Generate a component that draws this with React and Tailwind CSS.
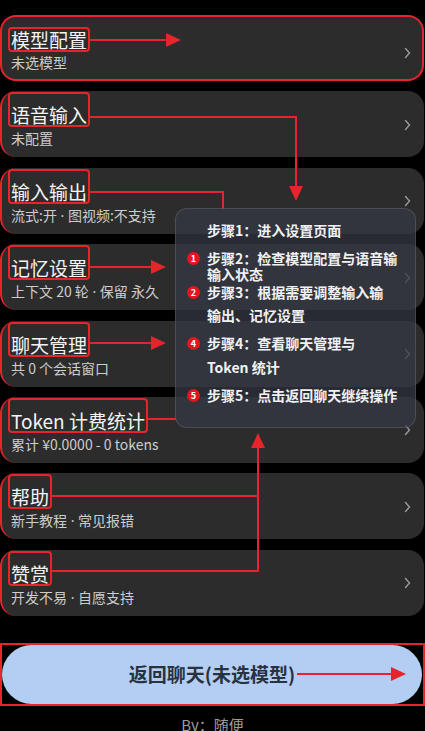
import React from 'react';

const RED = '#e5242b';

const cards = [
  { t: '模型配置', s: '未选模型', first: true },
  { t: '语音输入', s: '未配置' },
  { t: '输入输出', s: '流式:开 · 图视频:不支持' },
  { t: '记忆设置', s: '上下文 20 轮 · 保留 永久' },
  { t: '聊天管理', s: '共 0 个会话窗口' },
  { t: 'Token 计费统计', s: '累计 ¥0.0000 - 0 tokens' },
  { t: '帮助', s: '新手教程 · 常见报错' },
  { t: '赞赏', s: '开发不易 · 自愿支持' },
];

function Chevron() {
  return (
    <svg width="7" height="12" viewBox="0 0 7 12" className="shrink-0">
      <path d="M1.5 1.5 L5.5 6 L1.5 10.5" fill="none" stroke="#9a9a9a" strokeWidth="1.4" strokeLinecap="round" strokeLinejoin="round" />
    </svg>
  );
}

function Sub({ s }) {
  const parts = s.split(' · ');
  return parts.map((p, i) => (
    <React.Fragment key={i}>
      {i > 0 ? <span className="font-['Noto_Sans',sans-serif]"> · </span> : null}
      {p}
    </React.Fragment>
  ));
}

function Card({ t, s, first }) {
  return (
    <div
      className={
        first
          ? 'flex h-[66px] items-start justify-between rounded-[16px] border-2 border-[#e5242b] bg-[#2c2c2c] pt-[10px] pl-[6px]'
          : 'flex h-[66px] items-start justify-between rounded-[16px] border-l-2 border-[#e5242b] bg-[#2c2c2c] pt-[1px] pl-[6px]'
      }
    >
      <div className="flex flex-col items-start">
        <span
          className={
            first
              ? 'rounded-[4px] border-2 border-[#e5242b] px-[1px] text-[19px] leading-[21px] text-[#f4f4f4]'
              : 'rounded-[4px] border-2 border-[#e5242b] px-[1px] pt-[10px] text-[19px] leading-[21px] text-[#f4f4f4]'
          }
        >
          {t}
        </span>
        <span className={first ? 'mt-[1px] pl-[3px] text-[14px] leading-[18px] text-[#cdcdcd]' : 'mt-[2px] pl-[3px] text-[14px] leading-[18px] text-[#cdcdcd]'}>
          <Sub s={s} />
        </span>
      </div>
      <div className={first ? 'mr-[11px] self-center' : 'mr-[13px] self-center'}>
        <Chevron />
      </div>
    </div>
  );
}

function Badge({ n }) {
  return (
    <span className="flex h-[13px] w-[13px] items-center justify-center rounded-full bg-[#e3161f] text-[9px] font-bold leading-none text-white">
      {n}
    </span>
  );
}

function Line({ badge, children, mt }) {
  return (
    <div className={`flex h-[16px] items-center ${mt}`}>
      <div className="flex w-[31px] shrink-0 pl-[11px]">{badge ? <Badge n={badge} /> : null}</div>
      <span className="whitespace-nowrap text-[14px] font-semibold leading-[16px] text-[#f1f1f3]">{children}</span>
    </div>
  );
}

function Popup() {
  return (
    <div className="absolute left-[175px] top-[208px] flex h-[220px] w-[241px] flex-col rounded-[12px] border border-[rgba(255,255,255,0.12)] bg-[rgba(52,56,68,0.76)] pt-[13px]">
      <Line mt="mt-0">步骤1：进入设置页面</Line>
      <Line badge="1" mt="mt-[12px]">步骤2：检查模型配置与语音输</Line>
      <Line mt="mt-0">输入状态</Line>
      <Line badge="2" mt="mt-[2px]">步骤3：根据需要调整输入输</Line>
      <Line mt="mt-[7px]">输出、记忆设置</Line>
      <Line badge="4" mt="mt-[12px]">步骤4：查看聊天管理与</Line>
      <Line mt="mt-[8px]">Token 统计</Line>
      <Line badge="5" mt="mt-[12px]">步骤5：点击返回聊天继续操作</Line>
    </div>
  );
}

function Annotations() {
  return (
    <svg className="pointer-events-none absolute left-0 top-0" width="425" height="731" viewBox="0 0 425 731">
      <g fill="none" stroke={RED} strokeWidth="2">
        <path d="M90 40 H167" />
        <path d="M90 117 H296 V188" />
        <path d="M90 192 H223 V209" />
        <path d="M90 267 H152" />
        <path d="M90 343 H152" />
        <path d="M147 419 H176" />
        <path d="M52 496 H258" />
        <path d="M52 571 H258" />
        <path d="M258 572 V446" />
        <path d="M297 674 H392" />
      </g>
      <g fill={RED}>
        <polygon points="166,33 181,40 166,47" />
        <polygon points="289,186 303,186 296,201" />
        <polygon points="151,260 166,267 151,274" />
        <polygon points="151,336 166,343 151,350" />
        <polygon points="251,448 265,448 258,433" />
        <polygon points="391,667 406,674 391,681" />
      </g>
    </svg>
  );
}

export default function App() {
  return (
    <div className="relative h-[731px] w-[425px] overflow-hidden bg-black font-['Noto_Sans_CJK_SC','Noto_Sans',sans-serif]">
      <div className="flex flex-col gap-[10.4px] pt-[15px] pr-[1px]">
        {cards.map((c) => (
          <Card key={c.t} {...c} />
        ))}
      </div>
      <div className="mt-[27px] border-2 border-[#e5242b]">
        <div className="mr-[1px] flex h-[59px] items-center justify-center rounded-full bg-[#b4cef3]">
          <span className="text-[19px] font-bold text-[#283240]">返回聊天(未选模型)</span>
        </div>
      </div>
      <div className="mt-[9px] text-center text-[15px] leading-[20px] text-[#9c9c9c]">By：随便</div>
      <Annotations />
      <Popup />
    </div>
  );
}
